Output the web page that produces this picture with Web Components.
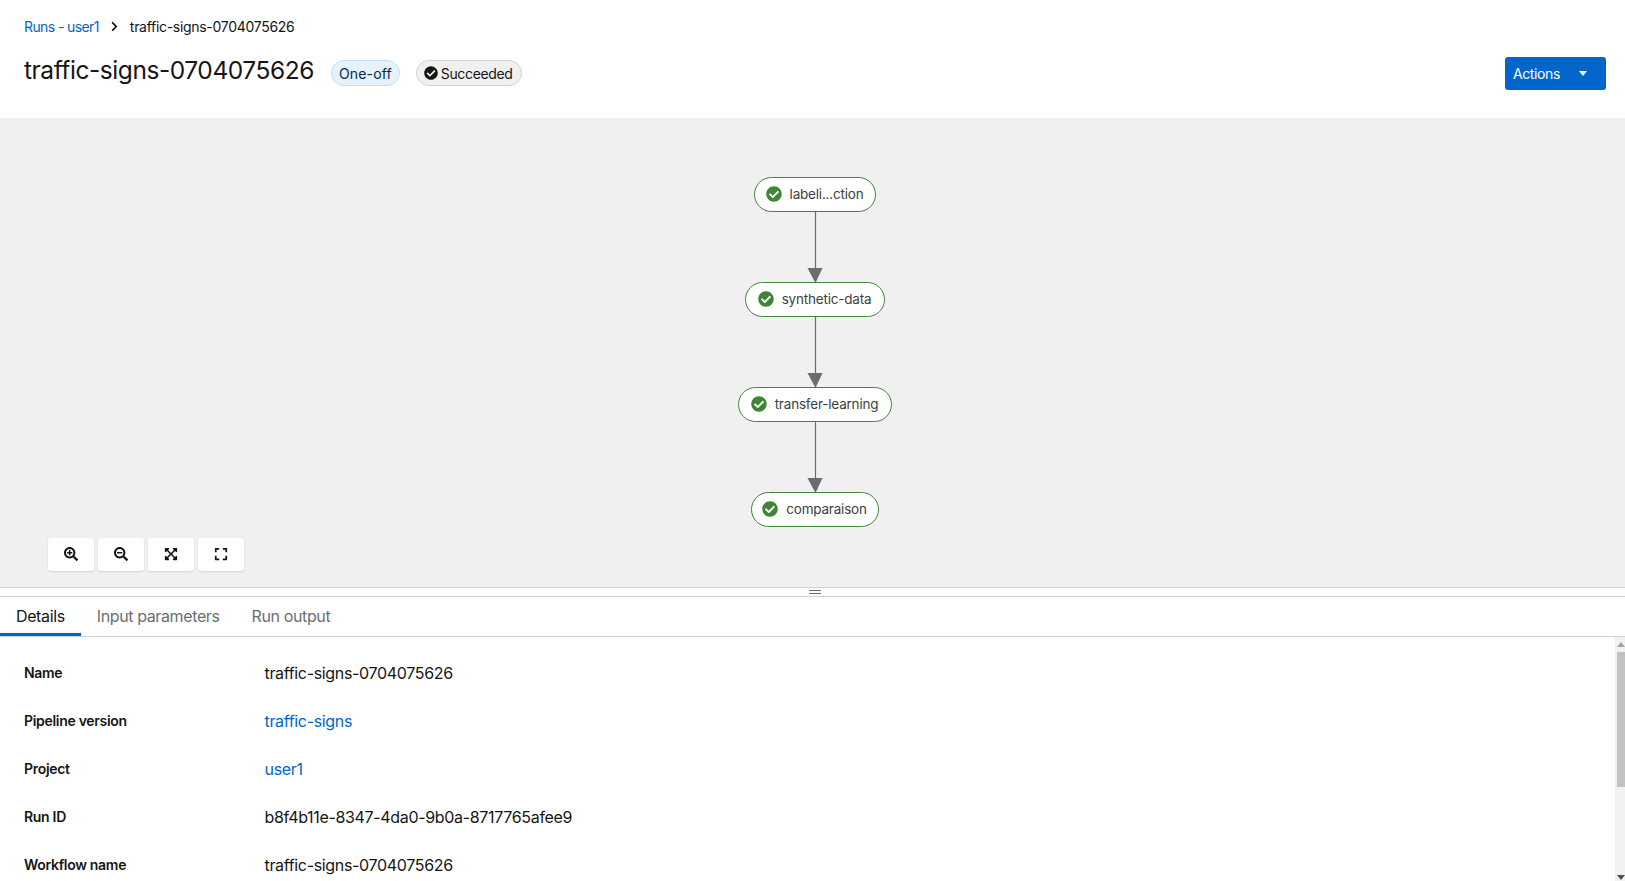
<!DOCTYPE html>
<html>
<head>
<meta charset="utf-8">
<title>traffic-signs-0704075626</title>
<style>
    html, body { margin: 0; height: 881px; overflow: hidden; }
    body {
        background: #fff;
        color: #151515;
        font-family: Inter, "Noto Sans", sans-serif;
        display: flex;
        flex-direction: column;
    }
</style>
</head>
<body>
<run-header>
    <run-breadcrumb slot="crumbs" link="Runs - user1" current="traffic-signs-0704075626"></run-breadcrumb>
    <span slot="title">traffic-signs-0704075626</span>
    <run-label slot="labels" kind="blue">One-off</run-label>
    <run-label slot="labels" kind="grey" icon>Succeeded</run-label>
    <actions-button slot="actions">Actions</actions-button>
</run-header>
<graph-canvas>
    <graph-node style="left:754px;top:59px;width:122px">labeli...ction</graph-node>
    <graph-node style="left:745px;top:164px;width:140px">synthetic-data</graph-node>
    <graph-node style="left:738px;top:269px;width:154px">transfer-learning</graph-node>
    <graph-node style="left:751px;top:374px;width:128px">comparaison</graph-node>
    <graph-toolbar></graph-toolbar>
</graph-canvas>
<drawer-splitter></drawer-splitter>
<tab-bar>
    <tab-item active>Details</tab-item>
    <tab-item>Input parameters</tab-item>
    <tab-item>Run output</tab-item>
</tab-bar>
<details-panel>
    <detail-row label="Name">traffic-signs-0704075626</detail-row>
    <detail-row label="Pipeline version" link>traffic-signs</detail-row>
    <detail-row label="Project" link>user1</detail-row>
    <detail-row label="Run ID">b8f4b11e-8347-4da0-9b0a-8717765afee9</detail-row>
    <detail-row label="Workflow name">traffic-signs-0704075626</detail-row>
</details-panel>

<script>
const icons = {
    check: `<svg viewBox="0 0 512 512" fill="currentColor"><path d="M504 256c0 136.967-111.033 248-248 248S8 392.967 8 256 119.033 8 256 8s248 111.033 248 248zM227.314 387.314l184-184c6.248-6.248 6.248-16.379 0-22.627l-22.627-22.627c-6.248-6.249-16.379-6.249-22.628 0L216 308.118l-70.059-70.059c-6.248-6.248-16.379-6.248-22.628 0l-22.627 22.627c-6.248 6.248-6.248 16.379 0 22.627l104 104c6.249 6.249 16.379 6.249 22.628 0z"/></svg>`,
    angle: `<svg viewBox="0 0 320 512" fill="currentColor"><path d="M285.476 272.971L91.132 467.314c-9.373 9.373-24.569 9.373-33.941 0l-22.667-22.667c-9.357-9.357-9.375-24.522-.04-33.901L188.505 256 34.484 101.255c-9.335-9.379-9.317-24.544.04-33.901l22.667-22.667c9.373-9.373 24.569-9.373 33.941 0L285.475 239.03c9.373 9.372 9.373 24.568.001 33.941z"/></svg>`,
    zoomIn: `<svg viewBox="0 0 512 512" fill="currentColor"><path d="M304 192v32c0 6.6-5.4 12-12 12h-56v56c0 6.6-5.4 12-12 12h-32c-6.6 0-12-5.4-12-12v-56h-56c-6.6 0-12-5.4-12-12v-32c0-6.6 5.4-12 12-12h56v-56c0-6.6 5.4-12 12-12h32c6.6 0 12 5.4 12 12v56h56c6.6 0 12 5.4 12 12zm201 284.7L476.7 505c-9.4 9.4-24.6 9.4-33.9 0L343 405.3c-4.5-4.5-7-10.6-7-17V372c-35.3 27.6-79.7 44-128 44C93.1 416 0 322.9 0 208S93.1 0 208 0s208 93.1 208 208c0 48.3-16.4 92.7-44 128h16.3c6.4 0 12.5 2.5 17 7l99.7 99.7c9.3 9.4 9.3 24.6 0 34zM344 208c0-75.2-60.8-136-136-136S72 132.8 72 208s60.8 136 136 136 136-60.8 136-136z"/></svg>`,
    zoomOut: `<svg viewBox="0 0 512 512" fill="currentColor"><path d="M304 192v32c0 6.6-5.4 12-12 12H124c-6.6 0-12-5.4-12-12v-32c0-6.6 5.4-12 12-12h168c6.6 0 12 5.4 12 12zm201 284.7L476.7 505c-9.4 9.4-24.6 9.4-33.9 0L343 405.3c-4.5-4.5-7-10.6-7-17V372c-35.3 27.6-79.7 44-128 44C93.1 416 0 322.9 0 208S93.1 0 208 0s208 93.1 208 208c0 48.3-16.4 92.7-44 128h16.3c6.4 0 12.5 2.5 17 7l99.7 99.7c9.3 9.4 9.3 24.6 0 34zM344 208c0-75.2-60.8-136-136-136S72 132.8 72 208s60.8 136 136 136 136-60.8 136-136z"/></svg>`,
    fit: `<svg viewBox="0 0 448 512" fill="currentColor"><path d="M448 344v112a23.94 23.94 0 0 1-24 24H312c-21.39 0-32.09-25.9-17-41l36.2-36.2L224 295.6 116.77 402.9 153 439c15.09 15.1 4.39 41-17 41H24a23.94 23.94 0 0 1-24-24V344c0-21.4 25.89-32.1 41-17l36.19 36.2L184.46 256 77.18 148.7 41 185c-15.1 15.1-41 4.4-41-17V56a23.94 23.94 0 0 1 24-24h112c21.39 0 32.09 25.9 17 41l-36.2 36.2L224 216.4l107.23-107.3L295 73c-15.09-15.1-4.39-41 17-41h112a23.94 23.94 0 0 1 24 24v112c0 21.4-25.89 32.1-41 17l-36.19-36.2L263.54 256l107.28 107.3L407 327.1c15.1-15.2 41-4.5 41 16.9z"/></svg>`,
    expand: `<svg viewBox="0 0 448 512" fill="currentColor"><path d="M0 180V56c0-13.3 10.7-24 24-24h124c6.6 0 12 5.4 12 12v40c0 6.6-5.4 12-12 12H64v84c0 6.6-5.4 12-12 12H12c-6.6 0-12-5.4-12-12zM288 44v40c0 6.6 5.4 12 12 12h84v84c0 6.6 5.4 12 12 12h40c6.6 0 12-5.4 12-12V56c0-13.3-10.7-24-24-24H300c-6.6 0-12 5.4-12 12zm148 276h-40c-6.6 0-12 5.4-12 12v84h-84c-6.6 0-12 5.4-12 12v40c0 6.6 5.4 12 12 12h124c13.3 0 24-10.7 24-24V332c0-6.6-5.4-12-12-12zM160 468v-40c0-6.6-5.4-12-12-12H64v-84c0-6.6-5.4-12-12-12H12c-6.6 0-12 5.4-12 12v124c0 13.3 10.7 24 24 24h124c6.6 0 12-5.4 12-12z"/></svg>`
};

// small helper, every element below is just markup + style in a shadow root
class BaseElement extends HTMLElement {
    constructor() {
        super();
        this.attachShadow({mode: "open"});
    }
    render(html) {
        this.shadowRoot.innerHTML = html;
    }
}

class RunBreadcrumb extends BaseElement {
    connectedCallback() {
        this.render(`
            <style>
                :host { display: flex; align-items: center; font-size: 14px; line-height: 21px; letter-spacing: -.3px; }
                a { color: #06c; text-decoration: none; letter-spacing: -.6px; }
                svg { width: 7px; height: 11px; margin: 0 12px 0 12px; color: #151515; }
            </style>
            <a>${this.getAttribute("link")}</a>${icons.angle}<span>${this.getAttribute("current")}</span>
        `);
    }
}

class RunLabel extends BaseElement {
    connectedCallback() {
        const blue = this.getAttribute("kind") === "blue";
        this.render(`
            <style>
                :host {
                    display: inline-flex; align-items: center; gap: 3px;
                    height: 26px; box-sizing: border-box; padding: 0 ${blue ? "7px" : "8px"} 0 7px;
                    border-radius: 30px; font-size: 14px;
                    letter-spacing: ${blue ? ".15px" : "-.35px"};
                    border: 1px solid ${blue ? "#bee1f4" : "#d2d2d2"};
                    background: ${blue ? "#e7f1fa" : "#f0f0f0"};
                    color: ${blue ? "#002952" : "#151515"};
                }
                svg { width: 14px; height: 14px; }
            </style>
            ${this.hasAttribute("icon") ? icons.check : ""}<slot></slot>
        `);
    }
}

class ActionsButton extends BaseElement {
    connectedCallback() {
        this.render(`
            <style>
                :host {
                    display: flex; align-items: center; box-sizing: border-box;
                    width: 101px; height: 33px; padding-left: 8px;
                    background: #06c; color: #fff; border-radius: 3px;
                    font-size: 14px; letter-spacing: -.4px;
                }
                i { width: 0; height: 0; margin-left: 19px; border: 4px solid transparent; border-top: 5px solid #fff; border-bottom: 0; }
            </style>
            <slot></slot><i></i>
        `);
    }
}

class RunHeader extends BaseElement {
    connectedCallback() {
        this.render(`
            <style>
                :host { display: block; flex: none; height: 118px; box-sizing: border-box; padding: 16px 19px 0 24px; }
                .row { display: flex; align-items: flex-start; margin-top: 12px; }
                .title { font-size: 24.5px; line-height: 36px; letter-spacing: -.44px; margin: 3px 17px 0 0; }
                .labels { display: flex; gap: 16px; margin-top: 11px; }
                .actions { margin-left: auto; margin-top: 8px; }
            </style>
            <slot name="crumbs"></slot>
            <div class="row">
                <div class="title"><slot name="title"></slot></div>
                <div class="labels"><slot name="labels"></slot></div>
                <div class="actions"><slot name="actions"></slot></div>
            </div>
        `);
    }
}

class GraphNode extends BaseElement {
    connectedCallback() {
        this.render(`
            <style>
                :host {
                    position: absolute; height: 35px; box-sizing: border-box; padding-bottom: 2px;
                    display: flex; align-items: center; justify-content: center; gap: 8px;
                    background: #fff; border: 1px solid #3e8635; border-radius: 18px;
                    font-size: 13.5px; letter-spacing: -.2px; color: #3c3f42;
                    white-space: nowrap;
                }
                svg { width: 16px; height: 16px; color: #3e8635; flex: none; margin-left: -1px; }
            </style>
            ${icons.check}<slot></slot>
        `);
    }
}

class GraphToolbar extends BaseElement {
    connectedCallback() {
        const buttons = ["zoomIn", "zoomOut", "fit", "expand"]
            .map((name) => `<div class="btn">${icons[name]}</div>`).join("");
        this.render(`
            <style>
                :host { position: absolute; left: 48px; top: 420px; display: flex; gap: 4px; }
                .btn {
                    width: 46px; height: 33px; padding-bottom: 1px; box-sizing: border-box;
                    display: flex; align-items: center; justify-content: center;
                    background: #fff; border-radius: 3px; box-shadow: 0 1px 2px rgba(3,3,3,.12);
                    color: #151515;
                }
                svg { width: 14px; height: 14px; }
            </style>
            ${buttons}
        `);
    }
}

class GraphCanvas extends BaseElement {
    connectedCallback() {
        const edge = (top) => `
            <line x1="815.5" x2="815.5" y1="${top}" y2="${top + 57}" stroke="#6a6e73" stroke-width="1.2"/>
            <polygon points="807.5,${top + 56} 822.5,${top + 56} 815.5,${top + 71}" fill="#6a6e73"/>`;
        this.render(`
            <style>
                :host { display: block; flex: none; position: relative; height: 469px; background: #f0f0f0; overflow: hidden; }
                svg { position: absolute; left: 0; top: 0; width: 1625px; height: 469px; }
            </style>
            <svg viewBox="0 0 1625 469">${edge(94)}${edge(199)}${edge(304)}</svg>
            <slot></slot>
        `);
    }
}

class DrawerSplitter extends BaseElement {
    connectedCallback() {
        this.render(`
            <style>
                :host {
                    display: flex; flex: none; flex-direction: column; align-items: center; justify-content: center; gap: 2px;
                    height: 10px; box-sizing: border-box; background: #fff; padding-left: 5px;
                    border-top: 1px solid #d2d2d2; border-bottom: 1px solid #d2d2d2;
                }
                i { display: block; width: 12px; height: 1px; background: #6a6e73; }
            </style>
            <i></i><i></i>
        `);
    }
}

class TabBar extends BaseElement {
    connectedCallback() {
        this.render(`
            <style>
                :host { display: flex; flex: none; height: 40px; box-sizing: border-box; border-bottom: 1px solid #d2d2d2; }
            </style>
            <slot></slot>
        `);
    }
}

class TabItem extends BaseElement {
    connectedCallback() {
        const active = this.hasAttribute("active");
        this.render(`
            <style>
                :host {
                    display: flex; align-items: center; height: 39px; box-sizing: border-box;
                    padding: 0 16px 1px; font-size: 16px; letter-spacing: -.38px;
                    color: ${active ? "#151515" : "#6a6e73"};
                    ${active ? "box-shadow: inset 0 -3px 0 #06c;" : ""}
                }
            </style>
            <slot></slot>
        `);
    }
}

class DetailsPanel extends BaseElement {
    connectedCallback() {
        this.render(`
            <style>
                :host { display: flex; flex: 1; min-height: 0; overflow: hidden; }
                .list { flex: 1; padding: 11px 24px 0; }
                .bar { flex: none; width: 10px; display: flex; flex-direction: column; background: #f1f1f1; }
                .up, .down { height: 15px; flex: none; display: flex; justify-content: center; }
                .up { align-items: center; padding-left: 2px; }
                .up i { border: 4px solid transparent; border-top: 0; border-bottom: 5px solid #a3a3a3; }
                .thumb { height: 135px; margin-left: 2px; background: #c1c1c1; }
                .gap { flex: 1; }
                .down { align-items: flex-end; padding-left: 2px; height: 9px; }
                .down i { border: 4px solid transparent; border-bottom: 0; border-top: 5px solid #505050; margin-bottom: 1px; }
            </style>
            <div class="list"><slot></slot></div>
            <div class="bar">
                <div class="up"><i></i></div>
                <div class="thumb"></div>
                <div class="gap"></div>
                <div class="down"><i></i></div>
            </div>
        `);
    }
}

class DetailRow extends BaseElement {
    connectedCallback() {
        const link = this.hasAttribute("link");
        this.render(`
            <style>
                :host { display: grid; grid-template-columns: 240.5px 1fr; align-items: center; height: 48px; }
                .name { font-size: 14px; font-weight: 600; letter-spacing: -.3px; }
                .value { font-size: 16px; letter-spacing: -.33px; padding-top: 1px; color: ${link ? "#06c" : "#151515"}; }
            </style>
            <div class="name">${this.getAttribute("label")}</div>
            <div class="value"><slot></slot></div>
        `);
    }
}

customElements.define("run-breadcrumb", RunBreadcrumb);
customElements.define("run-label", RunLabel);
customElements.define("actions-button", ActionsButton);
customElements.define("run-header", RunHeader);
customElements.define("graph-node", GraphNode);
customElements.define("graph-toolbar", GraphToolbar);
customElements.define("graph-canvas", GraphCanvas);
customElements.define("drawer-splitter", DrawerSplitter);
customElements.define("tab-bar", TabBar);
customElements.define("tab-item", TabItem);
customElements.define("details-panel", DetailsPanel);
customElements.define("detail-row", DetailRow);
</script>
</body>
</html>
